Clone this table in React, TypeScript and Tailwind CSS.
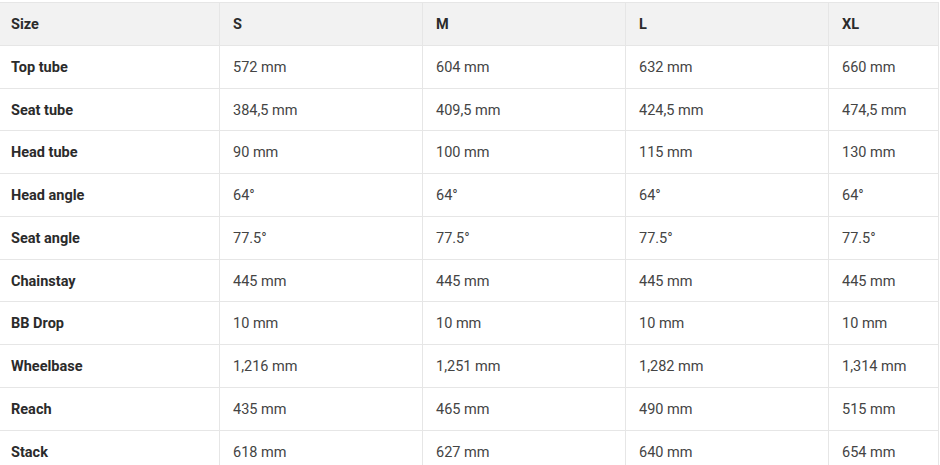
import React from "react";

const header = ["Size", "S", "M", "L", "XL"];
const rows: string[][] = [
  ["Top tube", "572 mm", "604 mm", "632 mm", "660 mm"],
  ["Seat tube", "384,5 mm", "409,5 mm", "424,5 mm", "474,5 mm"],
  ["Head tube", "90 mm", "100 mm", "115 mm", "130 mm"],
  ["Head angle", "64°", "64°", "64°", "64°"],
  ["Seat angle", "77.5°", "77.5°", "77.5°", "77.5°"],
  ["Chainstay", "445 mm", "445 mm", "445 mm", "445 mm"],
  ["BB Drop", "10 mm", "10 mm", "10 mm", "10 mm"],
  ["Wheelbase", "1,216 mm", "1,251 mm", "1,282 mm", "1,314 mm"],
  ["Reach", "435 mm", "465 mm", "490 mm", "515 mm"],
  ["Stack", "618 mm", "627 mm", "640 mm", "654 mm"],
];

const widths = ["w-[219px] pl-[11px]", "w-[203px] pl-[13px] border-l", "w-[203px] pl-[13px] border-l", "w-[203px] pl-[13px] border-l", "w-[111px] pl-[13px] border-l"];

function Row({ cells, head }: { cells: string[]; head?: boolean }) {
  return (
    <div className={`flex h-[42.75px] border-b border-[#e6e6e6] ${head ? "bg-[#f2f2f2]" : "bg-white"}`}>
      {cells.map((c, i) => (
        <div
          key={i}
          className={`${widths[i]} border-[#e6e6e6] flex items-center shrink-0 pt-[2px] ${
            head || i === 0 ? "font-bold text-[#2b2b2b]" : "text-[#444]"
          }`}
        >
          {c}
        </div>
      ))}
    </div>
  );
}

export default function App() {
  return (
    <div className="bg-white w-[940px] h-[465px] overflow-hidden pt-[2px] text-[14.5px]" style={{ fontFamily: "Roboto, 'Liberation Sans', sans-serif" }}>
      <div className="w-[939px] border-t border-r border-[#e6e6e6]">
        <Row cells={header} head />
        {rows.map((r, i) => (
          <Row key={i} cells={r} />
        ))}
      </div>
    </div>
  );
}
